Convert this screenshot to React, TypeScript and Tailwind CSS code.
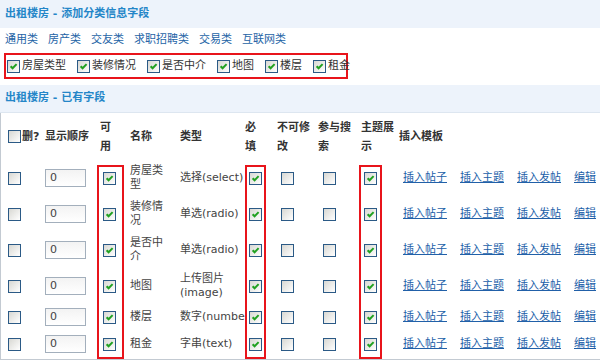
import React from "react";

const font = "font-['DejaVu_Sans','Noto_Sans_CJK_SC',sans-serif]";

const Check = ({ on = false }: { on?: boolean }) => (
  <span className="inline-flex h-[13px] w-[13px] shrink-0 items-center justify-center border border-[#2b5a86] bg-linear-to-br from-[#d8d8d3] to-white align-middle">
    {on && (
      <svg width="11" height="11" viewBox="0 0 11 11">
        <path d="M2.6 5.2 L4.6 7.3 L8.6 3.1" fill="none" stroke="#21a121" strokeWidth="2" />
      </svg>
    )}
  </span>
);

const cats = ["通用类", "房产类", "交友类", "求职招聘类", "交易类", "互联网类"];
const picked = ["房屋类型", "装修情况", "是否中介", "地图", "楼层", "租金"];

const rows = [
  { name: ["房屋类", "型"], type: ["选择(select)"], h: "h-[36px]" },
  { name: ["装修情", "况"], type: ["单选(radio)"], h: "h-[36px]" },
  { name: ["是否中", "介"], type: ["单选(radio)"], h: "h-[36px]" },
  { name: ["地图"], type: ["上传图片", "(image)"], h: "h-[36px]" },
  { name: ["楼层"], type: ["数字(number)"], h: "h-[26px]" },
  { name: ["租金"], type: ["字串(text)"], h: "h-[29px]" },
];

const Lines = ({ items }: { items: string[] }) => (
  <>
    {items.map((t, i) => (
      <div key={i}>{t}</div>
    ))}
  </>
);

export default function App() {
  return (
    <div className={`${font} h-[361px] w-[600px] overflow-hidden bg-white text-[11px] text-[#333]`}>
      {/* add fields */}
      <div className="flex h-[28px] items-center bg-[#edf3fb] pl-[5px] font-bold text-[#2486c8]">
        出租楼房 - 添加分类信息字段
      </div>
      <div className="flex h-[25px] items-center gap-[10px] whitespace-nowrap pl-[5px] text-[#2463a6]">
        {cats.map((c) => (
          <span key={c}>{c}</span>
        ))}
      </div>
      <div className="ml-[4px] flex h-[26px] w-[344px] items-center whitespace-nowrap border-2 border-[#e8141b] pl-px">
        {picked.map((p) => (
          <span key={p} className="mr-[11px] flex shrink-0 items-center gap-[2px]">
            <Check on />
            <span>{p}</span>
          </span>
        ))}
      </div>
      <div className="h-[6px]" />

      {/* existing fields */}
      <div className="flex h-[28px] items-center border-b border-[#dde6f0] bg-[#edf3fb] pl-[5px] font-bold text-[#2486c8]">
        出租楼房 - 已有字段
      </div>

      <div className="relative border-l border-[#c3cad2]">
        <table className="w-[599px] table-fixed border-collapse border-b border-[#c3cad2]">
          <colgroup>
            <col className="w-[41px]" />
            <col className="w-[55px]" />
            <col className="w-[30px]" />
            <col className="w-[50px]" />
            <col className="w-[66px]" />
            <col className="w-[31px]" />
            <col className="w-[41px]" />
            <col className="w-[43px]" />
            <col className="w-[38px]" />
            <col className="w-[204px]" />
          </colgroup>
          <thead>
            <tr className="h-[47px] text-left align-middle font-bold leading-[19px]">
              <th className="p-0 pl-[7px]">
                <span className="flex items-center gap-[1px] whitespace-nowrap">
                  <Check />
                  <span>删?</span>
                </span>
              </th>
              <th className="p-0 pl-[3px] whitespace-nowrap">显示顺序</th>
              <th className="p-0 pl-[3px]">可<br />用</th>
              <th className="p-0 pl-[3px]">名称</th>
              <th className="p-0 pl-[3px]">类型</th>
              <th className="p-0 pl-[2px]">必<br />填</th>
              <th className="p-0 pl-[3px] whitespace-nowrap">不可修<br />改</th>
              <th className="p-0 pl-[3px] whitespace-nowrap">参与搜<br />索</th>
              <th className="p-0 pl-[3px] whitespace-nowrap">主题展<br />示</th>
              <th className="p-0 pl-[3px] whitespace-nowrap">插入模板</th>
            </tr>
          </thead>
          <tbody>
            {rows.map((r, i) => (
              <tr key={i} className={`${r.h} align-middle leading-[14px]`}>
                <td className="p-0 pl-[7px]"><Check /></td>
                <td className="p-0 pl-[3px]">
                  <div className="flex h-[18px] w-[41px] items-center border border-[#a3afbc] bg-linear-to-b from-[#f3f3f3] to-white pl-[4px] text-[#444]">
                    0
                  </div>
                </td>
                <td className="p-0 pl-[6px]"><Check on /></td>
                <td className="p-0 pl-[3px] text-[#444]"><Lines items={r.name} /></td>
                <td className="p-0 pl-[3px] text-[#444]">
                  <div className="w-[67px] overflow-hidden whitespace-nowrap">
                    <Lines items={r.type} />
                  </div>
                </td>
                <td className="p-0 pl-[6px]"><Check on /></td>
                <td className="p-0 pl-[7px]"><Check /></td>
                <td className="p-0 pl-[8px]"><Check /></td>
                <td className="p-0 pl-[6px]"><Check on /></td>
                <td className="p-0 pl-[7px]">
                  <div className="flex gap-[13px] whitespace-nowrap text-[#2160a8] underline">
                    <a href="#">插入帖子</a>
                    <a href="#">插入主题</a>
                    <a href="#">插入发帖</a>
                    <a href="#">编辑</a>
                  </div>
                </td>
              </tr>
            ))}
          </tbody>
        </table>

        {/* red annotation frames */}
        <div className="absolute left-[96px] top-[52px] h-[194px] w-[27px] border-2 border-[#e8141b]" />
        <div className="absolute left-[244px] top-[52px] h-[194px] w-[21px] border-2 border-[#e8141b]" />
        <div className="absolute left-[358px] top-[52px] h-[194px] w-[23px] border-2 border-[#e8141b]" />
      </div>
    </div>
  );
}
